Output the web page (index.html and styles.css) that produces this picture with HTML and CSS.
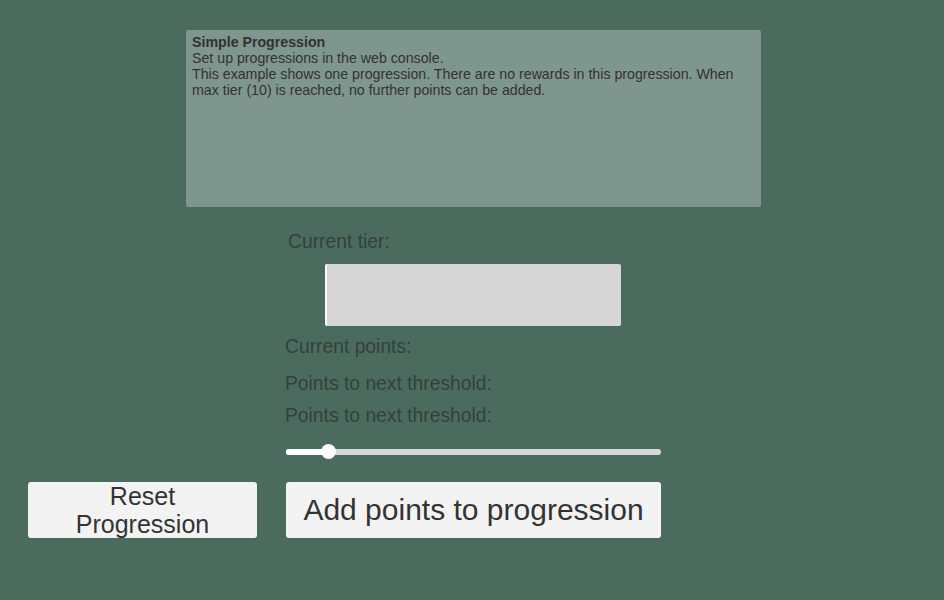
FILE: index.html
```html
<!DOCTYPE html>
<html lang="en">
<head>
    <meta charset="UTF-8">
    <meta name="viewport" content="width=device-width, initial-scale=1.0">
    <title>Simple Progression</title>
    <link rel="stylesheet" href="styles.css">
</head>
<body>
    <div class="info-panel">
        <div class="info-title">Simple Progression</div>
        <div>Set up progressions in the web console.</div>
        <div>This example shows one progression. There are no rewards in this progression. When max tier (10) is reached, no further points can be added.</div>
    </div>

    <div class="controls">
        <div class="label tier-label">Current tier:</div>
        <div class="tier-box"></div>
        <div class="label points-label">Current points:</div>
        <div class="label next-label">Points to next threshold:</div>
        <div class="label next-label2">Points to next threshold:</div>
        <div class="slider">
            <div class="slider-fill"></div>
            <div class="slider-knob"></div>
        </div>
    </div>

    <div class="button-row">
        <button class="btn btn-reset">Reset<br>Progression</button>
        <button class="btn btn-add">Add points to progression</button>
    </div>
</body>
</html>
```

FILE: styles.css
```css
body {
    font-family: "Liberation Sans", Arial, sans-serif;
    background-color: #4b6b5f;
    margin: 0;
    padding: 0;
    height: 600px;
    overflow: hidden;
}

.info-panel {
    margin: 30px 0 0 186px;
    width: 575px;
    height: 177px;
    box-sizing: border-box;
    padding: 4px 10px 0 6px;
    background-color: #7f968e;
    border-radius: 2px;
    color: #323232;
    font-size: 14.2px;
    line-height: 16px;
}

.info-title {
    font-weight: bold;
}

.controls {
    margin-left: 285px;
    width: 376px;
}

.label {
    font-size: 19.3px;
    line-height: 22px;
    color: #33413b;
}

.tier-label {
    margin-top: 24px;
    padding-left: 3px;
}

.tier-box {
    margin: 11px 0 0 40px;
    width: 296px;
    height: 62px;
    box-sizing: border-box;
    background-color: #d6d6d6;
    border-left: 2px solid #fff;
    border-radius: 2px;
}

.points-label {
    margin-top: 10px;
}

.next-label {
    margin-top: 15px;
}

.next-label2 {
    margin-top: 10px;
}

.slider {
    position: relative;
    margin: 22px 0 0 1px;
    width: 375px;
    height: 6px;
    background-color: #d9d9d9;
    border-radius: 3px;
}

.slider-fill {
    width: 43px;
    height: 6px;
    background-color: #fff;
    border-radius: 3px;
}

.slider-knob {
    position: absolute;
    left: 35px;
    top: -5px;
    width: 15px;
    height: 15px;
    background-color: #fff;
    border-radius: 50%;
}

.button-row {
    display: flex;
    gap: 29px;
    margin: 27px 0 0 28px;
}

.btn {
    height: 56px;
    border: none;
    padding: 0;
    background-color: #f3f3f3;
    color: #333;
    border-radius: 3px;
    font-family: "Liberation Sans", Arial, sans-serif;
    overflow: visible;
}

.btn-reset {
    width: 229px;
    font-size: 25px;
    line-height: 28px;
}

.btn-add {
    width: 375px;
    font-size: 30px;
}
```
